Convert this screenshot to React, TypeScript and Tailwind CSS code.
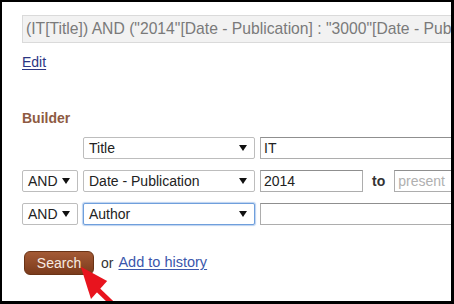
import React from "react";

const font = { fontFamily: '"Liberation Sans", Arial, sans-serif' };

function Caret() {
  return (
    <svg width="8" height="6" viewBox="0 0 8 6" className="shrink-0">
      <polygon points="0,0 8,0 4,6" fill="#111" />
    </svg>
  );
}

function Select({ label, width, focus }: { label: string; width: string; focus?: boolean }) {
  return (
    <div
      className={`${width} h-[22px] shrink-0 flex items-center justify-between pl-[5px] pr-[7px] rounded-[2px] bg-white text-[14px] text-[#222] border ${
        focus ? "border-[#6f9fdc] shadow-[0_0_1px_1px_rgba(120,165,225,0.5)]" : "border-[#bdbdbd]"
      }`}
    >
      <span className="leading-[20px]">{label}</span>
      <Caret />
    </div>
  );
}

function Input({ value, width, placeholder }: { value?: string; width: string; placeholder?: string }) {
  return (
    <div
      className={`${width} h-[22px] shrink-0 border border-[#adadad] border-t-[#8f8f8f] bg-white pl-[3px] text-[14px] leading-[20px] ${
        placeholder ? "text-[#b0b0b0]" : "text-[#222]"
      }`}
    >
      {value ?? placeholder}
    </div>
  );
}

export default function App() {
  return (
    <div className="w-[454px] h-[304px] bg-black pl-[2px] pt-[2px] pr-[3px] pb-[3px]" style={font}>
      <div className="relative h-full w-full bg-white overflow-hidden pl-[20px] pt-[13px]">
        <div className="h-[28px] w-[700px] border border-[#dadada] bg-[#f2f2f2] pl-[3px] text-[15.7px] leading-[26px] text-[#7a7a7a] whitespace-nowrap">
          (IT[Title]) AND ("2014"[Date - Publication] : "3000"[Date - Publication])
        </div>
        <div className="mt-[11px] h-[16px] text-[14px] leading-[16px]">
          <a className="text-[#2c3683] underline underline-offset-2">Edit</a>
        </div>
        <div className="mt-[40px] h-[16px] text-[14px] leading-[16px] font-bold text-[#8e5a42]">Builder</div>
        <div className="mt-[11px] flex flex-col gap-[11px] w-[700px]">
          <div className="flex items-center gap-[5px]">
            <div className="w-[56px] shrink-0" />
            <Select label="Title" width="w-[172px]" />
            <Input value="IT" width="w-[400px]" />
          </div>
          <div className="flex items-center gap-[5px]">
            <Select label="AND" width="w-[56px]" />
            <Select label="Date - Publication" width="w-[172px]" />
            <Input value="2014" width="w-[103px]" />
            <span className="ml-[4px] mr-[4px] text-[14px] font-bold text-[#333]">to</span>
            <Input placeholder="present" width="w-[200px]" />
          </div>
          <div className="flex items-center gap-[5px]">
            <Select label="AND" width="w-[56px]" />
            <Select label="Author" width="w-[172px]" focus />
            <Input value="" width="w-[400px]" />
          </div>
        </div>
        <div className="mt-[26px] flex items-center pl-[2px]">
          <button className="h-[24px] w-[70px] rounded-[6px] border border-[#6a3316] bg-gradient-to-b from-[#a45a35] to-[#7b3b1c] text-[14px] leading-[20px] text-[#f6ebe2]">
            Search
          </button>
          <span className="ml-[7px] text-[14px] text-[#333]">or</span>
          <a className="ml-[5px] text-[14.5px] text-[#3b57ac] underline underline-offset-2">Add to history</a>
        </div>
        <svg className="absolute left-0 top-0 pointer-events-none" width="454" height="304" viewBox="2 2 449 299">
          <line x1="96" y1="285" x2="124" y2="312" stroke="#e8141e" strokeWidth="5" />
          <polygon points="80,263 106,277 90,295" fill="#e8141e" />
        </svg>
      </div>
    </div>
  );
}
